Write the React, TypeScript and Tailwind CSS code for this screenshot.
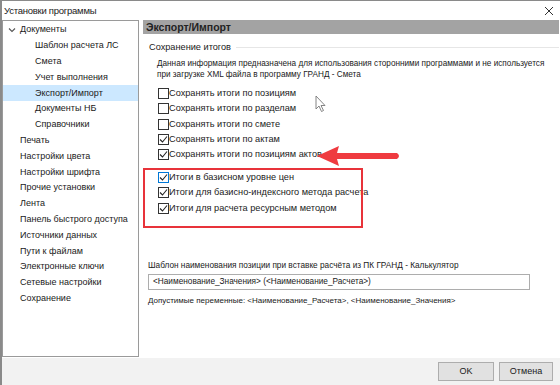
import React from "react";

const tree = [
  { label: "Документы", level: 0, open: true },
  { label: "Шаблон расчета ЛС", level: 1 },
  { label: "Смета", level: 1 },
  { label: "Учет выполнения", level: 1 },
  { label: "Экспорт/Импорт", level: 1, selected: true },
  { label: "Документы НБ", level: 1 },
  { label: "Справочники", level: 1 },
  { label: "Печать", level: 0 },
  { label: "Настройки цвета", level: 0 },
  { label: "Настройки шрифта", level: 0 },
  { label: "Прочие установки", level: 0 },
  { label: "Лента", level: 0 },
  { label: "Панель быстрого доступа", level: 0 },
  { label: "Источники данных", level: 0 },
  { label: "Пути к файлам", level: 0 },
  { label: "Электронные ключи", level: 0 },
  { label: "Сетевые настройки", level: 0 },
  { label: "Сохранение", level: 0 },
];

function Check({ checked, focus }: { checked?: boolean; focus?: boolean }) {
  return (
    <span
      className={
        "flex h-[11px] w-[11px] shrink-0 items-center justify-center border bg-white " +
        (focus ? "border-[#0078d7]" : "border-[#333333]")
      }
    >
      {checked && (
        <svg width="9" height="9" viewBox="0 0 9 9">
          <path d="M1 4.5 L3.5 7 L8 1.5" fill="none" stroke="#222" strokeWidth="1.1" />
        </svg>
      )}
    </span>
  );
}

function Row({ label, checked, focus }: { label: string; checked?: boolean; focus?: boolean }) {
  return (
    <div className="flex h-[15.3px] items-center pl-[15px]">
      <Check checked={checked} focus={focus} />
      <span>{label}</span>
    </div>
  );
}

export default function App() {
  return (
    <div
      className="relative flex h-[385px] w-[560px] flex-col overflow-hidden whitespace-nowrap border-l-2 border-t border-[#8a8a8a] bg-white text-[9.2px] leading-[11px] text-[#1a1a1a]"
      style={{ fontFamily: '"Liberation Sans", Arial, sans-serif' }}
    >
      {/* Title bar */}
      <div className="flex h-[19px] items-center justify-between pl-[2px] pr-[6px] text-[9.5px] tracking-[-0.25px]">
        <span>Установки программы</span>
        <svg width="10" height="10" viewBox="0 0 10 10">
          <path d="M1 1 L9 9 M9 1 L1 9" stroke="#333" strokeWidth="1" />
        </svg>
      </div>

      <div className="flex h-[338px]">
        {/* Sidebar */}
        <div className="h-[337px] w-[137px] shrink-0 border border-[#9a9a9a] pt-[1px] text-[9px]">
          {tree.map((item) => (
            <div
              key={item.label}
              className={
                "flex h-[15.8px] items-center " +
                (item.selected ? "bg-[#cce8ff] " : "") +
                (item.level === 1 ? "pl-[32px]" : "pl-[17px]")
              }
            >
              {item.open && (
                <svg className="-ml-[12px] mr-[4px]" width="8" height="8" viewBox="0 0 8 8">
                  <path d="M1 2.5 L4 5.5 L7 2.5" fill="none" stroke="#555" strokeWidth="1.1" />
                </svg>
              )}
              {item.label}
            </div>
          ))}
        </div>

        {/* Content */}
        <div className="ml-[4px] mr-[1px] flex-1">
          <div className="flex h-[14px] items-center bg-[#a3a3a3] pl-[3px] text-[10.5px] font-bold text-[#222]">Экспорт/Импорт</div>

          <div className="mt-[7px] flex h-[12px] items-center gap-[5px] pl-[6px]">
            <span>Сохранение итогов</span>
            <span className="h-px flex-1 bg-[#e6e6e6]" />
          </div>
          <div className="mt-[4.5px] pl-[14px] text-[8.2px]">
            <div className="h-[11px]">Данная информация предназначена для использования сторонними программами и не используется</div>
            <div className="h-[11px]">при загрузке XML файла в программу ГРАНД - Смета</div>
          </div>

          <div className="mt-[6.3px]">
            <Row label="Сохранять итоги по позициям" />
            <Row label="Сохранять итоги по разделам" />
            <Row label="Сохранять итоги по смете" />
            <Row label="Сохранять итоги по актам" checked />
            <Row label="Сохранять итоги по позициям актов" checked />
          </div>
          <div className="mt-[7.5px]">
            <Row label="Итоги в базисном уровне цен" checked focus />
            <Row label="Итоги для базисно-индексного метода расчета" checked />
            <Row label="Итоги для расчета ресурсным методом" checked />
          </div>

          <div className="mt-[44px] pl-[5px] text-[8.25px]">
            <div className="h-[11px]">Шаблон наименования позиции при вставке расчёта из ПК ГРАНД - Калькулятор</div>
            <div className="mt-[3px] flex h-[16px] w-[382px] items-center border border-[#adadad] pl-[4px]">
              &lt;Наименование_Значения&gt; (&lt;Наименование_Расчета&gt;)
            </div>
            <div className="mt-[5px] h-[11px] text-[8px]">
              Допустимые переменные: &lt;Наименование_Расчета&gt;, &lt;Наименование_Значения&gt;
            </div>
          </div>
        </div>
      </div>

      {/* Footer */}
      <div className="flex flex-1 items-center justify-end gap-[5px] bg-[#f2f2f2] pr-[7px]">
        <button className="h-[19px] w-[56px] border border-[#adadad] bg-[#e1e1e1] text-[9px]">OK</button>
        <button className="h-[19px] w-[54px] border border-[#adadad] bg-[#e1e1e1] text-[9px]">Отмена</button>
      </div>

      {/* Annotations */}
      <div className="absolute left-[141px] top-[167px] h-[60px] w-[220px] border-2 border-[#e8333a]" />
      <svg className="absolute left-[313px] top-[143px]" width="88" height="24" viewBox="0 0 88 24">
        <path d="M2 12 L24 2 L22 9 L82 9 Q86 12 82 15 L22 15 L24 22 Z" fill="#ef3b40" />
      </svg>
      <svg className="absolute left-[313px] top-[94px]" width="12" height="18" viewBox="0 0 12 18">
        <path d="M1 1 L1 14 L4 11 L6.5 16.5 L8.5 15.5 L6 10.5 L10 10.5 Z" fill="#fff" stroke="#777" strokeWidth="0.9" />
      </svg>
    </div>
  );
}
